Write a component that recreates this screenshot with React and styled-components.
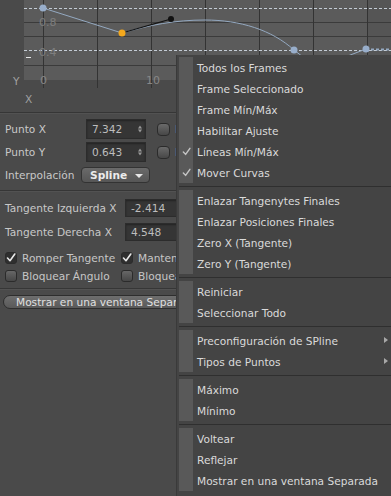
import React from 'react';
import styled, { createGlobalStyle } from 'styled-components';

const GlobalStyle = createGlobalStyle`
  html, body {
    margin: 0;
    padding: 0;
    background: #4a4a4a;
  }
  body {
    font-family: "DejaVu Sans", "Liberation Sans", sans-serif;
    font-size: 10.6px;
    color: #c6c6c6;
  }
`;

const Page = styled.div`
  position: relative;
  width: 391px;
  height: 496px;
  overflow: hidden;
  background: #4a4a4a;
`;

const Divider = styled.div`
  height: 1px;
  margin-top: ${props => props.top}px;
  background: #363636;
  box-shadow: 0 1px 0 #525252;
`;

// the panel runs on under the open menu, so it is cut at the menu's edge
const Panel = styled.div`
  display: flex;
  flex-direction: column;
  width: 178px;
  overflow: hidden;
`;

const Row = styled.div`
  display: flex;
  align-items: center;
  height: ${props => props.h}px;
  margin-top: ${props => props.top}px;
  padding-left: 5px;
  white-space: nowrap;
`;

const Label = styled.span`
  width: ${props => props.w}px;
  flex: none;
  color: #c8c8c8;
`;

const Field = styled.div`
  position: relative;
  display: flex;
  align-items: center;
  width: ${props => props.w}px;
  height: 100%;
  box-sizing: border-box;
  padding-left: 5px;
  background: #353535;
  border: 1px solid #2c2c2c;
  box-shadow: inset 0 1px 2px rgba(0, 0, 0, 0.35);
  color: #bdbdbd;
  flex: none;
`;

const Spinner = styled.div`
  position: absolute;
  right: 3px;
  top: 50%;
  transform: translateY(-50%);
  display: flex;
  flex-direction: column;
  gap: 1px;

  &:before, &:after {
    content: '';
    display: block;
    border-left: 2.5px solid transparent;
    border-right: 2.5px solid transparent;
  }
  &:before { border-bottom: 3px solid #9a9a9a; }
  &:after { border-top: 3px solid #9a9a9a; }
`;

const RoundBox = styled.span`
  width: 11px;
  height: 11px;
  margin: 0 5px 0 11px;
  border-radius: 4px;
  background: linear-gradient(#6a6a6a, #474747);
  border: 1px solid #2b2b2b;
  flex: none;
`;

const Dropdown = styled.div`
  position: relative;
  display: flex;
  align-items: center;
  width: 69px;
  height: 16px;
  box-sizing: border-box;
  padding-left: 8px;
  border-radius: 4px;
  border: 1px solid #333;
  background: linear-gradient(#6a6a6a, #565656);
  color: #ececec;
  font-weight: bold;

  &:after {
    content: '';
    position: absolute;
    right: 6px;
    top: 6px;
    border-left: 4px solid transparent;
    border-right: 4px solid transparent;
    border-top: 4px solid #e8e8e8;
  }
`;

const CheckBox = styled.span`
  display: flex;
  align-items: center;
  justify-content: center;
  width: 12px;
  height: 12px;
  box-sizing: border-box;
  border-radius: 3px;
  border: 1px solid #2b2b2b;
  background: ${props => props.checked ? '#2f2f2f' : 'linear-gradient(#676767, #474747)'};
  margin-right: 5px;
  flex: none;
`;

const CheckGroup = styled.div`
  display: flex;
  align-items: center;
  width: ${props => props.w}px;
  flex: none;
`;

const PillButton = styled.div`
  display: flex;
  align-items: center;
  margin: 6px 0 0 3px;
  width: 200px;
  height: 14px;
  box-sizing: border-box;
  padding-left: 12px;
  border-radius: 7px;
  border: 1px solid #2e2e2e;
  background: linear-gradient(#6e6e6e, #595959);
  color: #e0e0e0;
  white-space: nowrap;
  flex: none;
`;

const Menu = styled.div`
  position: absolute;
  left: 177px;
  top: 55px;
  right: 0;
  bottom: 0;
  padding: 2px 0 0 2px;
  background: #444444;
  box-shadow: -1px 0 0 #3a3a3a;
`;

const Item = styled.div`
  position: relative;
  display: flex;
  align-items: center;
  height: 21px;
  color: #dadada;
  white-space: nowrap;
`;

const Strip = styled.span`
  display: flex;
  align-items: center;
  justify-content: center;
  align-self: stretch;
  width: 14px;
  margin-right: 4px;
  background: #595959;
  flex: none;
`;

const Arrow = styled.span`
  position: absolute;
  right: 3px;
  top: 7px;
  border-top: 3.5px solid transparent;
  border-bottom: 3.5px solid transparent;
  border-left: 4px solid #a8a8a8;
`;

const Separator = styled.div`
  height: 7px;
  display: flex;
  align-items: center;

  &:after {
    content: '';
    flex: 1;
    height: 1px;
    background: #2f2f2f;
  }
`;

function Tick({ size = 9, color = '#cfcfcf' }) {
  return (
    <svg width={size} height={size} viewBox="0 0 10 10">
      <path d="M1.5 5.5 L4 8.2 L8.8 1.5" fill="none" stroke={color} strokeWidth="1.6" strokeLinecap="round" strokeLinejoin="round" />
    </svg>
  );
}

function Graph() {
  const cols = [43, 97, 151, 205, 259, 313, 367];
  return (
    <svg width="391" height="111" style={{ display: 'block' }}>
      <rect x="24" y="0" width="367" height="80" fill="#5b5b5b" />
      <rect x="368" y="0" width="23" height="80" fill="#555" />
      {[22, 36, 65].map(y => (
        <line key={y} x1="24" x2="391" y1={y + 0.5} y2={y + 0.5} stroke="#3b3b3b" />
      ))}
      {cols.map(x => (
        <line key={x} x1={x + 0.5} x2={x + 0.5} y1="0" y2="88" stroke="#333" />
      ))}
      <line x1="24" x2="391" y1="8.5" y2="8.5" stroke="#c3cbd4" strokeDasharray="3 2" />
      <line x1="24" x2="391" y1="50.5" y2="50.5" stroke="#c3cbd4" strokeDasharray="3 2" />
      <text x="39" y="26" fill="#7e7e7e" fontSize="11" fontFamily="DejaVu Sans">0.8</text>
      <text x="39" y="56" fill="#7e7e7e" fontSize="11" fontFamily="DejaVu Sans">0.4</text>
      <text x="40" y="84" fill="#878787" fontSize="11" fontFamily="DejaVu Sans">0</text>
      <text x="146" y="84" fill="#878787" fontSize="11" fontFamily="DejaVu Sans">10</text>
      <text x="13" y="85" fill="#a0a0a0" fontSize="10.6" fontFamily="DejaVu Sans">Y</text>
      <text x="25" y="103" fill="#a0a0a0" fontSize="10.6" fontFamily="DejaVu Sans">X</text>
      <line x1="26" x2="31" y1="57.5" y2="57.5" stroke="#e6e6e6" />
      <g fill="none" stroke="#94a9c1" strokeWidth="1">
        <path d="M43 8 L122 33" />
        <path d="M122 33 C150 25 175 20 205 20 C240 20 272 30 294 50 L303 57" />
        <path d="M345 57 L366 49" />
      </g>
      <line x1="366" x2="391" y1="49.5" y2="49.5" stroke="#94a9c1" strokeWidth="2" strokeDasharray="3 2" />
      <line x1="122" y1="33" x2="171" y2="19" stroke="#111" strokeWidth="1.2" />
      <circle cx="171" cy="19" r="3" fill="#111" />
      <circle cx="122" cy="33" r="3.5" fill="#f4a81d" />
      <circle cx="43" cy="8" r="3.5" fill="#98aecb" />
      <circle cx="294" cy="50" r="3.5" fill="#98aecb" />
      <circle cx="366" cy="49" r="3.5" fill="#98aecb" />
    </svg>
  );
}

const menuGroups = [
  [
    { label: 'Todos los Frames' },
    { label: 'Frame Seleccionado' },
    { label: 'Frame Mín/Máx' },
    { label: 'Habilitar Ajuste' },
    { label: 'Líneas Mín/Máx', checked: true },
    { label: 'Mover Curvas', checked: true },
  ],
  [
    { label: 'Enlazar Tangenytes Finales' },
    { label: 'Enlazar Posiciones Finales' },
    { label: 'Zero X (Tangente)' },
    { label: 'Zero Y (Tangente)' },
  ],
  [
    { label: 'Reiniciar' },
    { label: 'Seleccionar Todo' },
  ],
  [
    { label: 'Preconfiguración de SPline', submenu: true },
    { label: 'Tipos de Puntos', submenu: true },
  ],
  [
    { label: 'Máximo' },
    { label: 'Mínimo' },
  ],
  [
    { label: 'Voltear' },
    { label: 'Reflejar' },
    { label: 'Mostrar en una ventana Separada' },
  ],
];

function ContextMenu() {
  return (
    <Menu>
      {menuGroups.map((group, gi) => (
        <React.Fragment key={gi}>
          {gi > 0 && <Separator />}
          {group.map(item => (
            <Item key={item.label}>
              <Strip>{item.checked && <Tick size={9} color="#c4c4c4" />}</Strip>
              {item.label}
              {item.submenu && <Arrow />}
            </Item>
          ))}
        </React.Fragment>
      ))}
    </Menu>
  );
}

export default function App() {
  return (
    <Page>
      <GlobalStyle />
      <Graph />
      <Panel>
        <Divider top={1} />
        <Row h={20} top={6}>
          <Label w={81}>Punto X</Label>
          <Field w={60}>7.342<Spinner /></Field>
          <RoundBox />
          <span>B</span>
        </Row>
        <Row h={20} top={3}>
          <Label w={81}>Punto Y</Label>
          <Field w={60}>0.643<Spinner /></Field>
          <RoundBox />
          <span>B</span>
        </Row>
        <Row h={20} top={3}>
          <Label w={76}>Interpolación</Label>
          <Dropdown>Spline</Dropdown>
        </Row>
        <Divider top={5} />
        <Row h={18} top={8}>
          <Label w={120}>Tangente Izquierda X</Label>
          <Field w={70}>-2.414</Field>
        </Row>
        <Row h={18} top={6}>
          <Label w={120}>Tangente Derecha X</Label>
          <Field w={70}>4.548</Field>
        </Row>
        <Row h={17} top={8}>
          <CheckGroup w={116}>
            <CheckBox checked><Tick size={11} color="#e8e8e8" /></CheckBox>
            Romper Tangente
          </CheckGroup>
          <CheckGroup w={120}>
            <CheckBox checked><Tick size={11} color="#e8e8e8" /></CheckBox>
            Mantener
          </CheckGroup>
        </Row>
        <Row h={17} top={1}>
          <CheckGroup w={116}>
            <CheckBox />
            Bloquear Ángulo
          </CheckGroup>
          <CheckGroup w={120}>
            <CheckBox />
            Bloquear
          </CheckGroup>
        </Row>
        <Divider top={4} />
        <PillButton>Mostrar en una ventana Separada</PillButton>
      </Panel>
      <ContextMenu />
    </Page>
  );
}
